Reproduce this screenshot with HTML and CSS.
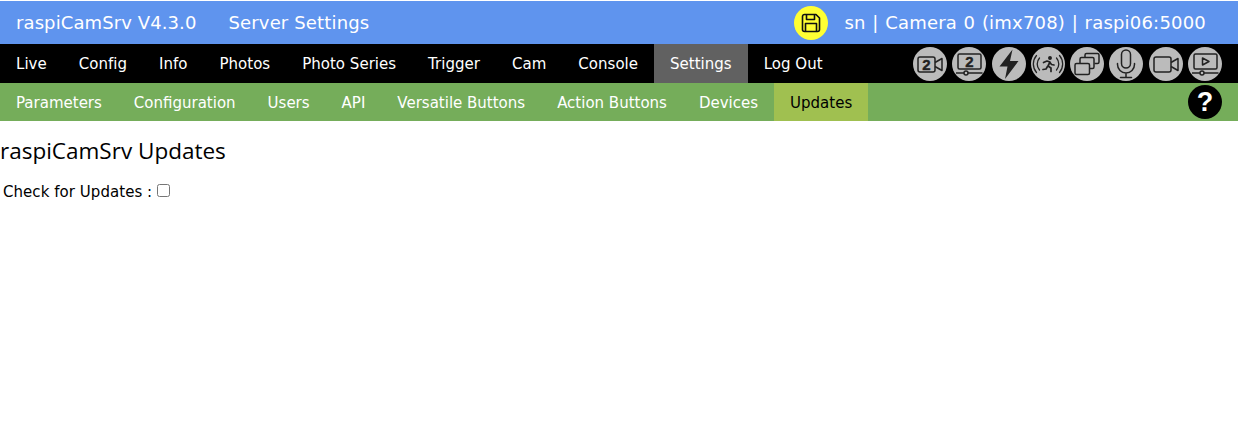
FILE: index.html
```html
<!DOCTYPE html>
<html lang="en">
<head>
    <meta charset="UTF-8">
    <title>raspiCamSrv - Server Settings</title>
    <link rel="stylesheet" href="styles.css">
</head>
<body>
    <header class="title-bar">
        <span class="app-name">raspiCamSrv V4.3.0</span>
        <span class="page-name">Server Settings</span>
        <span class="save-btn">
            <svg viewBox="0 0 24 24" width="24" height="24" fill="none" stroke="#111" stroke-width="1.6" stroke-linejoin="round">
                <path d="M3.500 5.500a2 2 0 0 1 2-2h11.500l3.500 3.500v11.500a2 2 0 0 1-2 2h-13a2 2 0 0 1-2-2z"/>
                <path d="M7.500 3.500v5h8v-5"/>
                <path d="M6.500 20.500v-8h11v8"/>
            </svg>
        </span>
        <span class="server-info">sn | Camera 0 (imx708) | raspi06:5000</span>
    </header>

    <nav class="main-nav">
        <a href="#">Live</a>
        <a href="#">Config</a>
        <a href="#">Info</a>
        <a href="#">Photos</a>
        <a href="#">Photo Series</a>
        <a href="#">Trigger</a>
        <a href="#">Cam</a>
        <a href="#">Console</a>
        <a href="#" class="active">Settings</a>
        <a href="#">Log Out</a>
        <div class="tool-icons">
            <!-- second camera video -->
            <span class="tool-icon">
                <svg viewBox="0 0 34 34" width="34" height="34" fill="none" stroke="#222" stroke-width="1.500" stroke-linejoin="round">
                    <rect x="5" y="10" width="17" height="15" rx="2"/>
                    <path d="M22 15.500l7-4v12l-7-4"/>
                    <text x="13.500" y="23" class="icon-digit">2</text>
                </svg>
            </span>
            <!-- second camera stream -->
            <span class="tool-icon">
                <svg viewBox="0 0 34 34" width="34" height="34" fill="none" stroke="#222" stroke-width="1.500" stroke-linejoin="round">
                    <rect x="6" y="7" width="23" height="15" rx="1.500"/>
                    <path d="M4 26h8M16 26h14.500"/>
                    <circle cx="14" cy="26" r="2"/>
                    <text x="17.500" y="20" class="icon-digit">2</text>
                </svg>
            </span>
            <!-- flash -->
            <span class="tool-icon">
                <svg viewBox="0 0 34 34" width="34" height="34">
                    <path fill="#222" d="M20.500 2.500L7.500 19.500h8l-2.500 12.500 13.500-18h-8.500z"/>
                </svg>
            </span>
            <!-- motion -->
            <span class="tool-icon">
                <svg viewBox="0 0 34 34" width="34" height="34" fill="none" stroke="#222" stroke-width="1.300" stroke-linecap="round" stroke-linejoin="round">
                    <path d="M8.500 11a9 9 0 0 0 0 12M5.500 8.500a13 13 0 0 0 0 17M25.500 11a9 9 0 0 1 0 12M28.500 8.500a13 13 0 0 1 0 17"/>
                    <circle cx="19" cy="11" r="1.300" fill="#222"/>
                    <path stroke-width="1.700" d="M12.500 15.500l3.500-1.500 3 1-2 4 3 2v3.500M16.500 19.500l-1.500 2.500-3 .5M19 15.500l1.500 2 2.500 .5"/>
                </svg>
            </span>
            <!-- multi cam -->
            <span class="tool-icon">
                <svg viewBox="0 0 34 34" width="34" height="34" fill="none" stroke="#222" stroke-width="1.500" stroke-linejoin="round">
                    <path d="M15 10.500v-2.500a1.500 1.500 0 0 1 1.500-1.500h11a1.500 1.500 0 0 1 1.500 1.500v7a1.500 1.500 0 0 1-1.500 1.500h-3"/>
                    <path d="M10 16v-4a1.500 1.500 0 0 1 1.500-1.500h11a1.500 1.500 0 0 1 1.500 1.500v8a1.500 1.500 0 0 1-1.500 1.500h-3"/>
                    <rect x="5" y="16.500" width="14.500" height="11" rx="1.500"/>
                </svg>
            </span>
            <!-- microphone -->
            <span class="tool-icon">
                <svg viewBox="0 0 34 34" width="34" height="34" fill="none" stroke="#222" stroke-width="1.500" stroke-linecap="round">
                    <rect x="12.500" y="3" width="9" height="18" rx="4.500"/>
                    <path d="M8.500 16.500v1a8.500 8.500 0 0 0 17 0v-1M17 26v4.500M11.500 30.500h11"/>
                </svg>
            </span>
            <!-- video -->
            <span class="tool-icon">
                <svg viewBox="0 0 34 34" width="34" height="34" fill="none" stroke="#222" stroke-width="1.500" stroke-linejoin="round">
                    <rect x="5" y="10" width="17" height="15" rx="2"/>
                    <path d="M22 15.500l7-4v12l-7-4"/>
                </svg>
            </span>
            <!-- video player -->
            <span class="tool-icon">
                <svg viewBox="0 0 34 34" width="34" height="34" fill="none" stroke="#222" stroke-width="1.500" stroke-linejoin="round">
                    <rect x="6" y="7" width="23" height="15" rx="1.500"/>
                    <path d="M4 26h8M16 26h14.500"/>
                    <circle cx="14" cy="26" r="2"/>
                    <path d="M14.500 11l6.500 3.500-6.500 3.500z"/>
                </svg>
            </span>
        </div>
    </nav>

    <nav class="sub-nav">
        <a href="#">Parameters</a>
        <a href="#">Configuration</a>
        <a href="#">Users</a>
        <a href="#">API</a>
        <a href="#">Versatile Buttons</a>
        <a href="#">Action Buttons</a>
        <a href="#">Devices</a>
        <a href="#" class="active">Updates</a>
        <span class="help-btn">?</span>
    </nav>

    <main>
        <h2>raspiCamSrv Updates</h2>
        <label class="update-check">Check for Updates : <input type="checkbox"></label>
    </main>
</body>
</html>
```

FILE: styles.css
```css
* {
    box-sizing: border-box;
}

body {
    margin: 0;
    padding-right: 1px;
    background-color: #fff;
    color: #000;
    font-family: "DejaVu Sans", Verdana, sans-serif;
    font-size: 15px;
}

/* Title bar */
.title-bar {
    display: flex;
    align-items: center;
    height: 43px;
    margin-top: 1px;
    padding-left: 16px;
    background-color: #5f94ee;
    color: #fff;
    font-size: 18px;
}

.app-name {
    letter-spacing: 0.1px;
}

.page-name {
    margin-left: 32px;
    letter-spacing: 0.15px;
}

.save-btn {
    display: flex;
    align-items: center;
    justify-content: center;
    width: 34px;
    height: 34px;
    margin-left: auto;
    border-radius: 50%;
    background-color: #ffff33;
}

.server-info {
    margin-left: 16px;
    margin-right: 32px;
    letter-spacing: 0.2px;
    word-spacing: 0.7px;
}

/* Navigation */
.main-nav,
.sub-nav {
    display: flex;
    align-items: stretch;
}

.main-nav {
    height: 39px;
    background-color: #000;
    letter-spacing: 0.02px;
}

.sub-nav {
    height: 38px;
    background-color: #75ad5a;
}

.main-nav a,
.sub-nav a {
    display: flex;
    align-items: center;
    padding: 0 16px;
    color: #fff;
    text-decoration: none;
}

.sub-nav a {
    padding-top: 2px;
}

.main-nav a.active {
    background-color: #616161;
}

.sub-nav a.active {
    background-color: #a0c050;
    color: #000;
}

/* Round icon buttons */
.tool-icons {
    display: flex;
    align-items: center;
    gap: 5.300px;
    margin-left: auto;
    margin-right: 16px;
}

.tool-icon {
    display: flex;
    width: 34px;
    height: 34px;
    border-radius: 50%;
    background-color: #bbb;
}

.icon-digit {
    fill: #222;
    stroke: #222;
    stroke-width: 0.4px;
    font-family: "Liberation Sans", Arial, sans-serif;
    font-size: 15px;
    font-weight: bold;
    text-anchor: middle;
}

.help-btn {
    align-self: center;
    width: 34px;
    height: 34px;
    margin-left: auto;
    margin-right: 16px;
    border-radius: 50%;
    background-color: #000;
    color: #fff;
    font-family: "Liberation Sans", Arial, sans-serif;
    font-size: 27px;
    font-weight: bold;
    line-height: 34px;
    text-align: center;
}

/* Content */
h2 {
    margin: 16px 0 19px;
    font-family: "Open Sans", sans-serif;
    font-size: 22.500px;
    font-weight: 400;
    line-height: 27px;
}

.update-check {
    display: flex;
    align-items: center;
    padding-left: 3px;
    white-space: pre;
    letter-spacing: 0.05px;
}

.update-check input {
    width: 13px;
    height: 13px;
    margin: 0 0 4px;
}
```
